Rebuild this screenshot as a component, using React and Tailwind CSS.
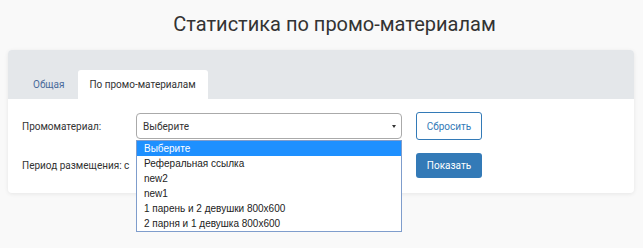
import React from 'react';

const options = [
  'Выберите',
  'Реферальная ссылка',
  'new2',
  'new1',
  '1 парень и 2 девушки 800x600',
  '2 парня и 1 девушка 800x600',
];

function App() {
  return (
    <div className="h-[248px] w-full bg-[#f9f9f9] font-['Roboto',sans-serif] text-[#333]">
      <div className="h-[50px] flex items-center justify-center pl-[26px] pb-[2px]">
        <h1 className="text-[20px] leading-none text-[#333]">Статистика по промо-материалам</h1>
      </div>

      <div className="mx-[8px] w-[626px] rounded-[4px] bg-white shadow-[0_1px_4px_rgba(0,0,0,0.08)]">
        {/* tabs */}
        <div className="h-[49px] rounded-t-[4px] bg-[#e4e7ea] flex items-end pl-[14px]">
          <div className="h-[29px] px-[11px] flex items-center text-[10px] text-[#4a6a9a]">Общая</div>
          <div className="h-[29px] w-[130px] ml-[2px] rounded-t-[3px] bg-white flex items-center justify-center text-[10px] text-[#333]">
            По промо-материалам
          </div>
        </div>

        {/* body */}
        <div className="relative h-[94px] pt-[13px] pl-[14px]">
          <div className="flex items-center h-[28px]">
            <label className="w-[114px] text-[10px] text-[#333]">Промоматериал:</label>
            <div className="w-[266px] h-[26px] border border-[#aaa] rounded-[4px] flex items-center justify-between pl-[6px] pr-[5px]">
              <span className="text-[10px] text-[#333]">Выберите</span>
              <span className="w-0 h-0 border-x-[2px] border-x-transparent border-t-[3px] border-t-[#333]"></span>
            </div>
            <button className="ml-[14px] w-[66px] h-[28px] rounded-[3px] border border-[#337ab7] bg-white text-[10px] text-[#337ab7]">
              Сбросить
            </button>
          </div>

          <div className="flex items-center h-[25px] mt-[13px]">
            <label className="w-[114px] text-[10px] text-[#333] whitespace-nowrap">Период размещения: с</label>
            <div className="w-[266px]"></div>
            <button className="ml-[14px] w-[66px] h-[25px] rounded-[3px] bg-[#337ab7] text-[10px] text-white">
              Показать
            </button>
          </div>

          {/* open select list */}
          <ul className="absolute left-[128px] top-[41px] w-[266px] border border-[#7f9dcc] bg-white font-['Liberation_Sans',sans-serif] text-[10px] leading-[15px] z-10">
            {options.map((o, i) => (
              <li
                key={o}
                className={i === 0 ? 'h-[15px] pl-[7px] bg-[#1e90ff] text-white' : 'h-[15px] pl-[7px] text-[#222]'}
              >
                {o}
              </li>
            ))}
          </ul>
        </div>
      </div>
    </div>
  );
}

export default App;
